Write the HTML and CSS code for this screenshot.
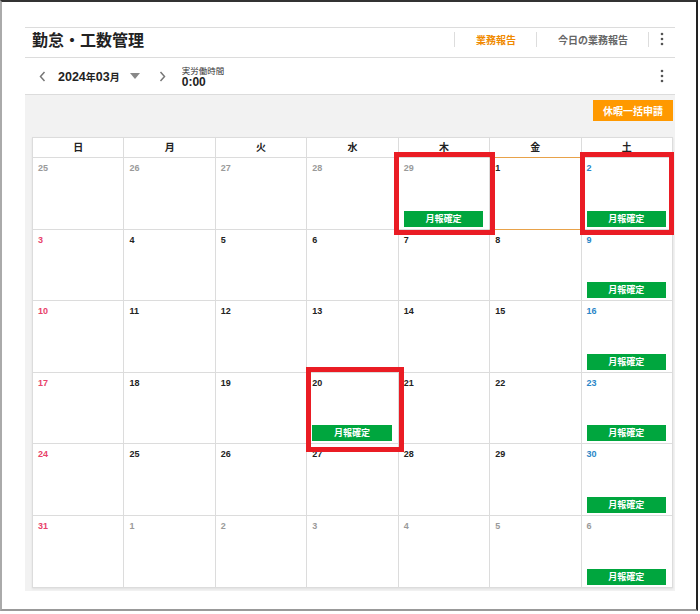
FILE: index.html
```html
<!DOCTYPE html>
<html lang="ja">
<head>
<meta charset="utf-8">
<title>勤怠・工数管理</title>
<link rel="stylesheet" href="styles.css">
</head>
<body>
<div class="frame">
  <div class="app">
    <div class="titlebar">
      <h1 class="title">勤怠・工数管理</h1>
      <div class="links">
        <a class="link link-active">業務報告</a>
        <a class="link">今日の業務報告</a>
        <span class="kebab-wrap">
          <svg class="kebab" width="4" height="14" viewBox="0 0 4 14"><circle cx="2" cy="2" r="1.3"/><circle cx="2" cy="7" r="1.3"/><circle cx="2" cy="12" r="1.3"/></svg>
        </span>
      </div>
    </div>
    <div class="navbar">
      <svg class="chev" width="7" height="11" viewBox="0 0 7 11"><polyline points="5.5,1 1.5,5.5 5.5,10"/></svg>
      <div class="month"><span class="num">2024</span><span class="unit">年</span><span class="num">03</span><span class="unit">月</span></div>
      <svg class="tri" width="10" height="6" viewBox="0 0 10 6"><polygon points="0,0 10,0 5,6"/></svg>
      <svg class="chev chev-next" width="7" height="11" viewBox="0 0 7 11"><polyline points="1.5,1 5.5,5.5 1.5,10"/></svg>
      <div class="worktime">
        <div class="wt-label">実労働時間</div>
        <div class="wt-value">0:00</div>
      </div>
      <svg class="kebab kebab-nav" width="4" height="14" viewBox="0 0 4 14"><circle cx="2" cy="2" r="1.3"/><circle cx="2" cy="7" r="1.3"/><circle cx="2" cy="12" r="1.3"/></svg>
    </div>
    <div class="panel">
      <div class="actions">
        <button class="btn-orange">休暇一括申請</button>
      </div>
      <div class="calendar">
        <div class="wd">日</div><div class="wd">月</div><div class="wd">火</div><div class="wd">水</div><div class="wd">木</div><div class="wd">金</div><div class="wd">土</div>

        <div class="cell"><span class="d other">25</span></div>
        <div class="cell"><span class="d other">26</span></div>
        <div class="cell"><span class="d other">27</span></div>
        <div class="cell"><span class="d other">28</span></div>
        <div class="cell"><span class="d other">29</span><span class="btn-green">月報確定</span></div>
        <div class="cell today"><span class="d">1</span></div>
        <div class="cell"><span class="d sat">2</span><span class="btn-green">月報確定</span></div>

        <div class="cell"><span class="d sun">3</span></div>
        <div class="cell"><span class="d">4</span></div>
        <div class="cell"><span class="d">5</span></div>
        <div class="cell"><span class="d">6</span></div>
        <div class="cell"><span class="d">7</span></div>
        <div class="cell"><span class="d">8</span></div>
        <div class="cell"><span class="d sat">9</span><span class="btn-green">月報確定</span></div>

        <div class="cell"><span class="d sun">10</span></div>
        <div class="cell"><span class="d">11</span></div>
        <div class="cell"><span class="d">12</span></div>
        <div class="cell"><span class="d">13</span></div>
        <div class="cell"><span class="d">14</span></div>
        <div class="cell"><span class="d">15</span></div>
        <div class="cell"><span class="d sat">16</span><span class="btn-green">月報確定</span></div>

        <div class="cell"><span class="d sun">17</span></div>
        <div class="cell"><span class="d">18</span></div>
        <div class="cell"><span class="d">19</span></div>
        <div class="cell"><span class="d">20</span><span class="btn-green">月報確定</span></div>
        <div class="cell"><span class="d">21</span></div>
        <div class="cell"><span class="d">22</span></div>
        <div class="cell"><span class="d sat">23</span><span class="btn-green">月報確定</span></div>

        <div class="cell"><span class="d sun">24</span></div>
        <div class="cell"><span class="d">25</span></div>
        <div class="cell"><span class="d">26</span></div>
        <div class="cell"><span class="d">27</span></div>
        <div class="cell"><span class="d">28</span></div>
        <div class="cell"><span class="d">29</span></div>
        <div class="cell"><span class="d sat">30</span><span class="btn-green">月報確定</span></div>

        <div class="cell"><span class="d sun">31</span></div>
        <div class="cell"><span class="d other">1</span></div>
        <div class="cell"><span class="d other">2</span></div>
        <div class="cell"><span class="d other">3</span></div>
        <div class="cell"><span class="d other">4</span></div>
        <div class="cell"><span class="d other">5</span></div>
        <div class="cell"><span class="d other">6</span><span class="btn-green">月報確定</span></div>

        <div class="mark mark-1"></div>
        <div class="mark mark-2"></div>
        <div class="mark mark-3"></div>
      </div>
    </div>
  </div>
</div>
</body>
</html>
```
FILE: styles.css
```css
* { box-sizing: border-box; }
html, body { margin: 0; padding: 0; background: #fff; }
body {
  font-family: "Liberation Sans", "Noto Sans CJK JP", Arial, sans-serif;
  color: #222;
}
.frame {
  width: 698px;
  height: 611px;
  border-top: 2px solid #333;
  border-left: 2px solid #aaa;
  border-right: 2px solid #222;
  border-bottom: 2px solid #999;
  padding: 25px 0 0 23px;
}
.app { width: 650px; }

.titlebar {
  border-top: 1px solid #dcdcdc;
  border-bottom: 1px solid #dcdcdc;
  height: 31px;
  display: flex;
  align-items: center;
  justify-content: space-between;
  padding: 0 0 8px 7px;
}
.title {
  margin: 0;
  font-size: 16px;
  font-weight: bold;
  color: #222;
  font-family: "Noto Sans CJK JP", sans-serif;
  line-height: 20px;
}
.links { display: flex; align-items: center; margin-top: 1px; }
.link {
  font-family: "Noto Sans CJK JP", sans-serif;
  font-size: 10px;
  font-weight: 600;
  color: #666;
  padding: 0 20px 0 21px;
  border-left: 1px solid #ddd;
  line-height: 15px;
}
.link-active { color: #f08a00; }
.kebab-wrap {
  border-left: 1px solid #ddd;
  width: 27px;
  height: 15px;
  display: flex;
  align-items: center;
  justify-content: center;
}
.kebab { fill: #555; display: block; }

.navbar {
  height: 37px;
  border-bottom: 1px solid #dcdcdc;
  display: flex;
  align-items: center;
  padding: 0 0 0 14px;
}
.chev { fill: none; stroke: #777; stroke-width: 1.5; display: block; }
.month { margin-left: 12px; font-weight: bold; color: #222; line-height: 14px; }
.month .num { font-size: 12.5px; }
.month .unit { font-size: 10px; font-family: "Noto Sans CJK JP", sans-serif; }
.tri { fill: #888; margin-left: 10px; display: block; }
.chev-next { margin-left: 19px; }
.worktime { margin-left: 16px; padding-top: 2px; }
.wt-label {
  font-family: "Noto Sans CJK JP", sans-serif;
  font-size: 8.5px;
  line-height: 10px;
  color: #333;
}
.wt-value { font-size: 12px; font-weight: bold; line-height: 14px; color: #222; }
.kebab-nav { margin-left: auto; margin-right: 11px; }

.panel {
  background: #f2f2f2;
  padding: 5px 2px 3px 7px;
  height: 496px;
}
.actions { display: flex; justify-content: flex-end; height: 21px; }
.btn-orange {
  background: #ff9900;
  border: none;
  color: #fff;
  font-family: "Noto Sans CJK JP", sans-serif;
  font-weight: bold;
  font-size: 10px;
  width: 80px;
  height: 21px;
  padding: 0;
}
.calendar {
  position: relative;
  margin-top: 16px;
  display: grid;
  grid-template-columns: repeat(7, 1fr);
  grid-template-rows: 20px repeat(6, 71.6px);
  background: #fff;
  border-left: 1px solid #dcdcdc;
  border-top: 1px solid #dcdcdc;
  box-shadow: 0 1px 2px rgba(0,0,0,0.08);
  width: 641px;
}
.wd {
  border-right: 1px solid #dcdcdc;
  border-bottom: 1px solid #dcdcdc;
  text-align: center;
  font-family: "Noto Sans CJK JP", sans-serif;
  font-weight: bold;
  font-size: 10px;
  line-height: 17px;
  color: #222;
}
.cell {
  position: relative;
  border-right: 1px solid #dcdcdc;
  border-bottom: 1px solid #dcdcdc;
  display: flex;
  flex-direction: column;
  align-items: flex-start;
  padding: 5px 0 2px 5px;
}
.d { font-size: 9px; font-weight: bold; line-height: 11px; color: #222; }
.d.other { color: #9a9a9a; }
.d.sun { color: #e8436a; }
.d.sat { color: #2a86c8; }
.today::after {
  content: "";
  position: absolute;
  left: -1px; right: -1px; top: -1px; bottom: -1px;
  border: 1px solid #e8a24a;
  border-left-color: #dcdcdc;
}
.btn-green {
  margin-top: auto;
  align-self: stretch;
  margin-right: 6px;
  height: 16px;
  background: #00a63e;
  color: #fff;
  font-family: "Noto Sans CJK JP", sans-serif;
  font-weight: bold;
  font-size: 9px;
  line-height: 16px;
  text-align: center;
}
.mark {
  position: absolute;
  border: 5px solid #ea1c24;
  pointer-events: none;
}
.mark-1 { left: 361px; top: 14px; width: 101px; height: 83px; }
.mark-2 { left: 547px; top: 14px; width: 94px; height: 83px; }
.mark-3 { left: 273px; top: 229px; width: 98px; height: 85px; }
```
